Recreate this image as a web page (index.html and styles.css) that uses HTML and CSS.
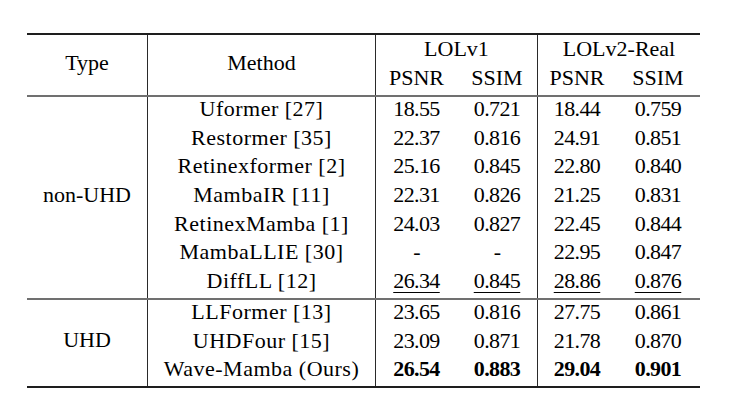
FILE: index.html
```html
<!DOCTYPE html>
<html lang="en">
<head>
<meta charset="utf-8">
<link rel="stylesheet" href="styles.css">
</head>
<body>
<div class="results">
  <div class="sec head">
    <div class="cell type-h vr">Type</div>
    <div class="cell method-h vr">Method</div>
    <div class="cell set-h set1 vr">LOLv1</div>
    <div class="cell set-h set2">LOLv2-Real</div>
    <div class="cell metric">PSNR</div>
    <div class="cell metric vr">SSIM</div>
    <div class="cell metric">PSNR</div>
    <div class="cell metric">SSIM</div>
  </div>

  <div class="sec group g7">
    <div class="cell type-c vr">non-UHD</div>
    <div class="cell m vr">Uformer [27]</div>
    <div class="cell n">18.55</div><div class="cell n vr">0.721</div><div class="cell n">18.44</div><div class="cell n">0.759</div>
    <div class="cell m vr">Restormer [35]</div>
    <div class="cell n">22.37</div><div class="cell n vr">0.816</div><div class="cell n">24.91</div><div class="cell n">0.851</div>
    <div class="cell m vr">Retinexformer [2]</div>
    <div class="cell n">25.16</div><div class="cell n vr">0.845</div><div class="cell n">22.80</div><div class="cell n">0.840</div>
    <div class="cell m vr">MambaIR [11]</div>
    <div class="cell n">22.31</div><div class="cell n vr">0.826</div><div class="cell n">21.25</div><div class="cell n">0.831</div>
    <div class="cell m vr">RetinexMamba [1]</div>
    <div class="cell n">24.03</div><div class="cell n vr">0.827</div><div class="cell n">22.45</div><div class="cell n">0.844</div>
    <div class="cell m vr">MambaLLIE [30]</div>
    <div class="cell n">-</div><div class="cell n vr">-</div><div class="cell n">22.95</div><div class="cell n">0.847</div>
    <div class="cell m vr">DiffLL [12]</div>
    <div class="cell n"><span class="ul">26.34</span></div><div class="cell n vr"><span class="ul">0.845</span></div><div class="cell n"><span class="ul">28.86</span></div><div class="cell n"><span class="ul">0.876</span></div>
  </div>

  <div class="sec group g3 last">
    <div class="cell type-c vr">UHD</div>
    <div class="cell m vr">LLFormer [13]</div>
    <div class="cell n">23.65</div><div class="cell n vr">0.816</div><div class="cell n">27.75</div><div class="cell n">0.861</div>
    <div class="cell m vr">UHDFour [15]</div>
    <div class="cell n">23.09</div><div class="cell n vr">0.871</div><div class="cell n">21.78</div><div class="cell n">0.870</div>
    <div class="cell m vr">Wave-Mamba (Ours)</div>
    <div class="cell n b">26.54</div><div class="cell n vr b">0.883</div><div class="cell n b">29.04</div><div class="cell n b">0.901</div>
  </div>
</div>
</body>
</html>
```

FILE: styles.css
```css
html, body {
  margin: 0;
  padding: 0;
  background: #ffffff;
}

body {
  font-family: "Liberation Serif", serif;
  font-size: 22px;
  color: #000;
  padding: 33px 0 0 27px;
}

.results {
  width: 673px;
  border-top: 2px solid #1e1e1e;
  border-bottom: 2px solid #1e1e1e;
}

.sec {
  display: grid;
  grid-template-columns: 121px 228px 81px 81px 78px 84px;
}

.head {
  grid-template-rows: 30px 30px;
  border-bottom: 2px solid #707070;
}

.g7 {
  grid-template-rows: repeat(7, 28.7px);
  border-bottom: 2px solid #707070;
}

.g3 {
  grid-template-rows: repeat(3, 28.7px);
}

.cell {
  text-align: center;
  white-space: nowrap;
  line-height: 23px;
}

.vr {
  border-right: 1px solid #2a2a2a;
}

.type-h {
  grid-row: 1 / 3;
  grid-column: 1;
  line-height: 56.5px;
}

.method-h {
  grid-row: 1 / 3;
  grid-column: 2;
  line-height: 56.5px;
}

.set-h {
  line-height: 28.5px;
}

.set1 { grid-column: 3 / 5; }
.set2 { grid-column: 5 / 7; }

.metric {
  grid-row: 2;
  line-height: 25px;
}

.type-c {
  grid-column: 1;
  grid-row: 1 / -1;
}

.g7 .type-c { line-height: 195px; }
.g3 .type-c { line-height: 80px; }

.m {
  grid-column: 2;
  letter-spacing: 0.5px;
}

.n {
  letter-spacing: -0.6px;
}

.b {
  font-weight: bold;
}

.ul {
  text-decoration: underline;
  text-decoration-thickness: 1px;
  text-underline-offset: 4px;
}
```
